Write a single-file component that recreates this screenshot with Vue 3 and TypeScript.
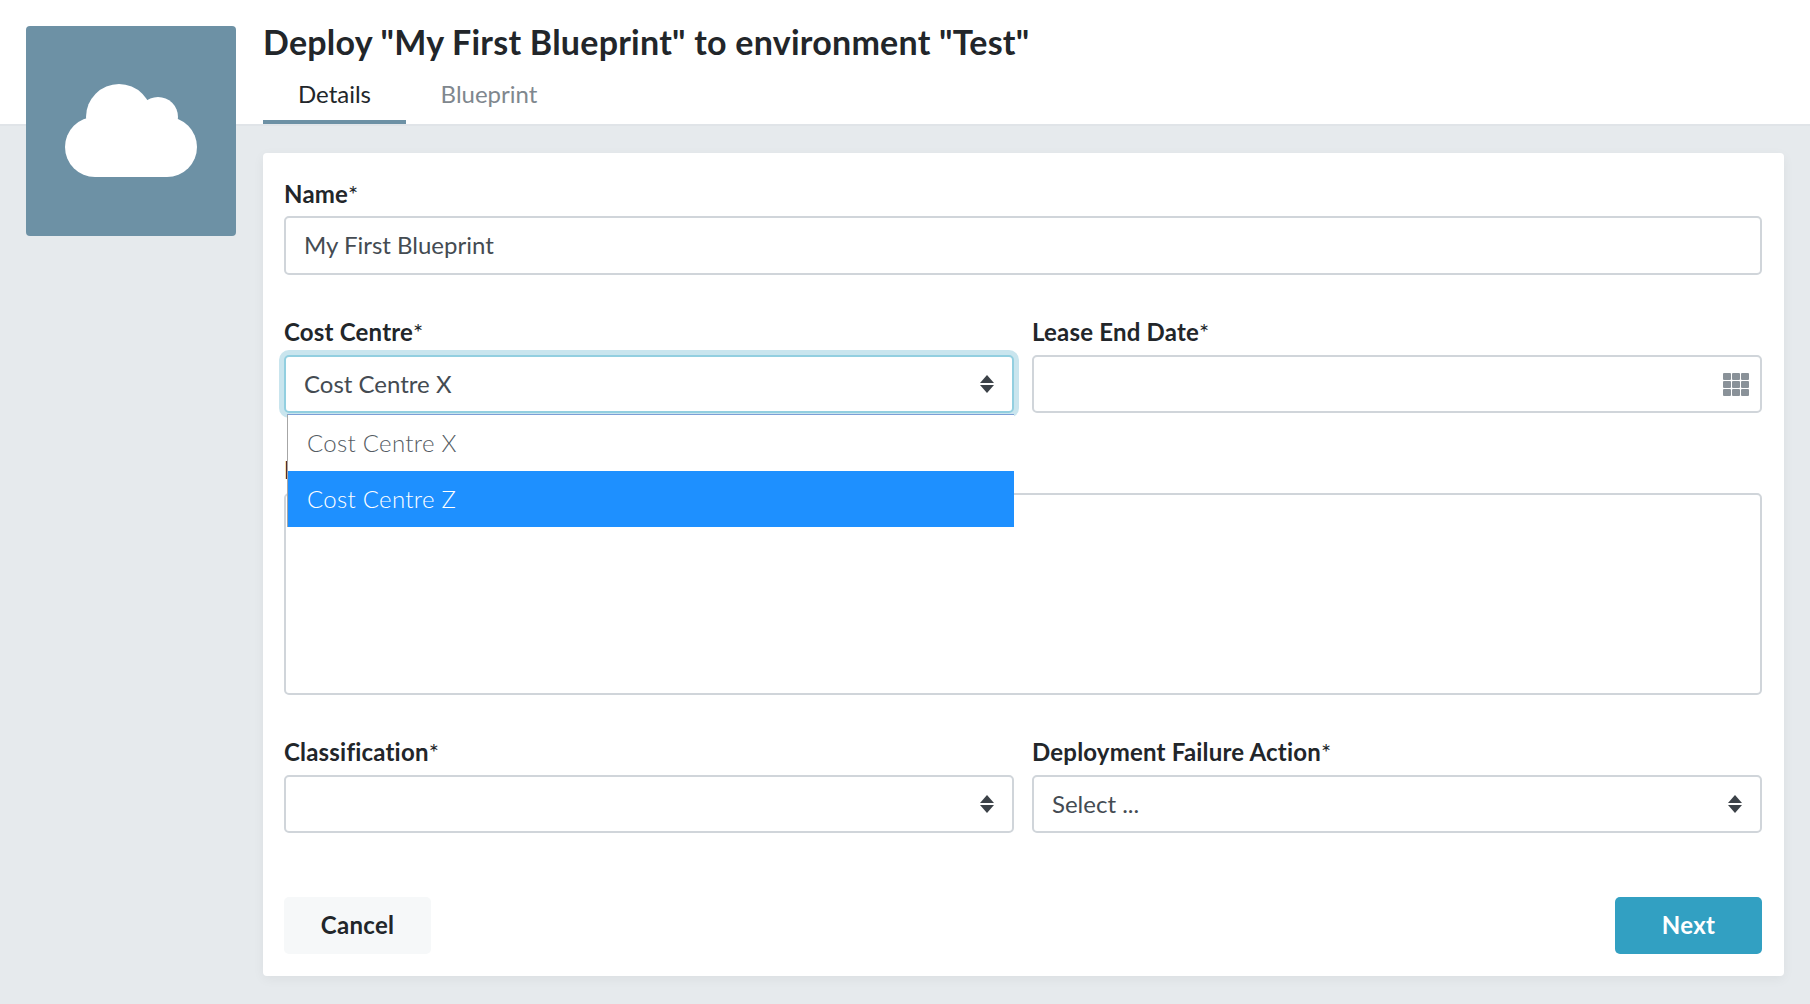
<script setup lang="ts">
const tabs = [
  { label: 'Details', active: true },
  { label: 'Blueprint', active: false },
]
const options = [
  { label: 'Cost Centre X', selected: false },
  { label: 'Cost Centre Z', selected: true },
]
const gridCells = Array.from({ length: 9 }, (_, i) => i)
</script>

<template>
  <div class="page">
    <div class="avatar">
      <svg class="cloud" viewBox="0 0 132 93" aria-hidden="true">
        <circle cx="30" cy="63" r="30" />
        <circle cx="102" cy="63" r="30" />
        <circle cx="54" cy="33" r="33" />
        <circle cx="93" cy="33" r="20" />
        <rect x="30" y="33" width="72" height="60" />
      </svg>
    </div>

    <header class="header">
      <h1 class="title">Deploy "My First Blueprint" to environment "Test"</h1>
      <nav class="tabs">
        <div v-for="tab in tabs" :key="tab.label" class="tab" :class="{ active: tab.active }">{{ tab.label }}</div>
      </nav>
    </header>

    <main class="panel">
      <div class="field name-field">
        <div class="label">Name<span class="req">*</span></div>
        <div class="control tall"><span class="value">My First Blueprint</span></div>
      </div>

      <div class="row">
        <div class="field cost">
          <div class="label">Cost Centre<span class="req">*</span></div>
          <div class="control focused">
            <span class="value">Cost Centre X</span>
            <span class="arrows"><i class="up"></i><i class="down"></i></span>
          </div>
          <ul class="dropdown">
            <li v-for="o in options" :key="o.label" class="option" :class="{ selected: o.selected }">{{ o.label }}</li>
          </ul>
        </div>
        <div class="field">
          <div class="label">Lease End Date<span class="req">*</span></div>
          <div class="control">
            <span></span>
            <span class="grid-icon"><i v-for="c in gridCells" :key="c"></i></span>
          </div>
        </div>
      </div>

      <div class="field">
        <div class="label">Description<span class="req">*</span></div>
        <div class="control area"></div>
      </div>

      <div class="row last-row">
        <div class="field">
          <div class="label">Classification<span class="req">*</span></div>
          <div class="control">
            <span></span>
            <span class="arrows"><i class="up"></i><i class="down"></i></span>
          </div>
        </div>
        <div class="field">
          <div class="label">Deployment Failure Action<span class="req">*</span></div>
          <div class="control">
            <span class="value">Select ...</span>
            <span class="arrows"><i class="up"></i><i class="down"></i></span>
          </div>
        </div>
      </div>

      <div class="actions">
        <button class="btn cancel" type="button">Cancel</button>
        <button class="btn next" type="button">Next</button>
      </div>
    </main>
  </div>
</template>

<style scoped>
.page {
  position: relative;
  width: 1810px;
  height: 1004px;
  overflow: hidden;
  background: #e6eaed;
  font-family: Lato, "Open Sans", sans-serif;
  color: #22262a;
}
.avatar {
  position: absolute;
  left: 26px;
  top: 26px;
  width: 210px;
  height: 210px;
  border-radius: 4px;
  background: #6d91a5;
  display: flex;
  align-items: center;
  justify-content: center;
}
.cloud {
  width: 132px;
  height: 93px;
  fill: #fff;
  margin-top: -1px;
}
.header {
  height: 124px;
  padding-left: 263px;
  background: #fff;
  border-bottom: 2px solid #e0e4e8;
  box-sizing: content-box;
}
.title {
  margin: 0;
  padding-top: 21px;
  font-size: 34px;
  line-height: 42px;
  font-weight: 700;
  letter-spacing: 0.24px;
  color: #22262a;
}
.tabs {
  display: flex;
  margin-top: 12px;
}
.tab {
  width: 143px;
  box-sizing: border-box;
  height: 49px;
  padding-top: 5px;
  text-align: center;
  font-size: 24px;
  line-height: 28px;
  color: #7f878e;
  border-bottom: 4px solid transparent;
}
.tab.active {
  color: #22262a;
  border-bottom-color: #6d91a5;
}
.tab + .tab {
  width: 166px;
}
.panel {
  margin: 27px 26px 0 263px;
  padding: 27px 22px 22px 21px;
  background: #fff;
  border-radius: 4px;
  box-shadow: 0 3px 12px rgba(0, 0, 0, 0.05);
}
.field {
  display: flex;
  flex-direction: column;
  gap: 12px;
  margin-bottom: 44px;
  min-width: 0;
}
.cost {
  position: relative;
}
.label {
  height: 24px;
  font-size: 24px;
  line-height: 26px;
  font-weight: 700;
  letter-spacing: 0.2px;
  color: #22262a;
}
.name-field .label {
  padding-top: 1px;
  margin-bottom: -1px;
}
.req {
  font-weight: 400;
}
.row {
  display: grid;
  grid-template-columns: 730px 730px;
  gap: 18px;
}
.control {
  box-sizing: border-box;
  height: 58px;
  padding: 0 17px 0 18px;
  border: 2px solid #d0d5da;
  border-radius: 5px;
  background: #fff;
  display: flex;
  align-items: center;
  justify-content: space-between;
  font-size: 24px;
  color: #444b52;
}
.value {
  position: relative;
  top: -1px;
}
.control.tall {
  height: 59px;
}
.control.area {
  height: 202px;
}
.control.focused {
  border-color: #92cfe0;
  box-shadow: 0 0 0 5px #c9e5ee;
}
.arrows {
  display: flex;
  flex-direction: column;
  gap: 2px;
  margin-right: 1px;
}
.arrows i {
  display: block;
  width: 0;
  height: 0;
  border-left: 7px solid transparent;
  border-right: 7px solid transparent;
}
.arrows .up {
  border-bottom: 8px solid #3c4248;
}
.arrows .down {
  border-top: 8px solid #3c4248;
}
.grid-icon {
  display: grid;
  grid-template-columns: repeat(3, 8px);
  grid-auto-rows: 7px;
  gap: 1px;
  margin-right: -6px;
}
.grid-icon i {
  display: block;
  background: #8a9299;
  border-radius: 1px;
}
.dropdown {
  position: absolute;
  z-index: 2;
  left: 3px;
  right: 0;
  top: 95px;
  margin: 0;
  padding: 0;
  list-style: none;
  background: #fff;
  border-top: 1px solid #7c9fd6;
  border-left: 1px solid #a6a6a6;
  border-right: 0;
}
.option {
  box-sizing: border-box;
  height: 56px;
  padding-left: 19px;
  padding-bottom: 2px;
  display: flex;
  align-items: center;
  font-size: 24px;
  font-weight: 300;
  letter-spacing: 0.3px;
  color: #555c63;
}
.option.selected {
  background: #1e90ff;
  color: #fff;
}
.last-row .field {
  margin-bottom: 0;
}
.actions {
  display: flex;
  justify-content: space-between;
  margin-top: 64px;
}
.btn {
  height: 57px;
  border: 0;
  border-radius: 5px;
  font-family: inherit;
  font-size: 24px;
  font-weight: 700;
  letter-spacing: 0.3px;
  padding: 0 0 3px;
}
.cancel {
  width: 147px;
  background: #f6f8f9;
  color: #22262a;
}
.next {
  width: 147px;
  background: #32a0c2;
  color: #fff;
}
</style>

<style>
html, body { margin: 0; background: #e6eaed; }
</style>
